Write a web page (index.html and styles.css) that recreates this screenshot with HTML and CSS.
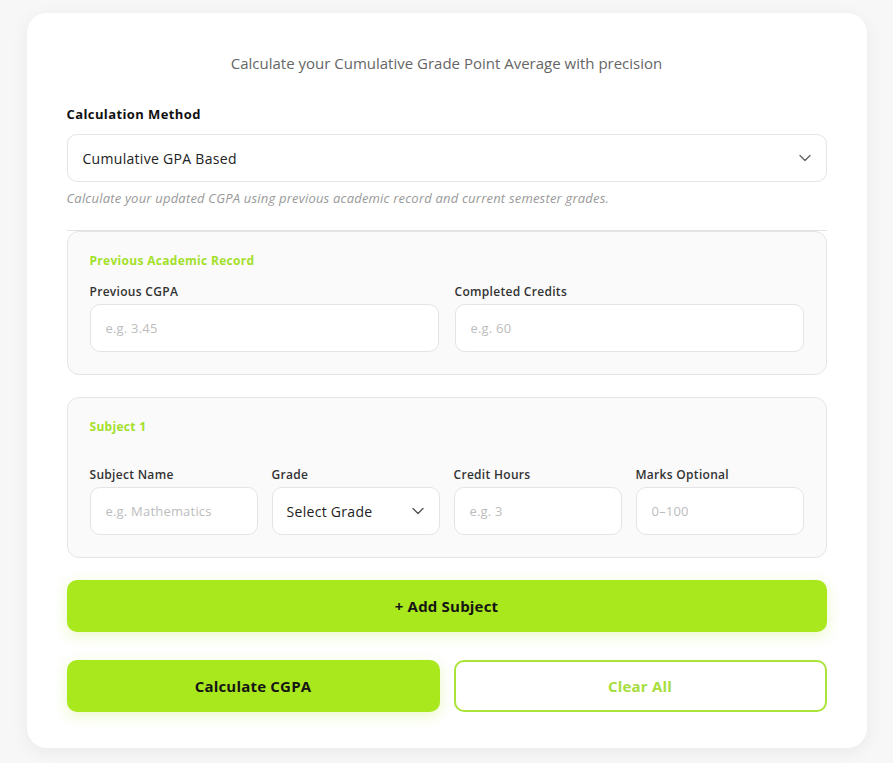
FILE: index.html
```html
<!DOCTYPE html>
<html>
<head>
  <link rel="stylesheet" href="styles.css">
</head>
<body>
  <div class="card">
    <p class="subtitle">Calculate your Cumulative Grade Point Average with precision</p>

    <label class="main-label">Calculation Method</label>
    <div class="select big">
      <span>Cumulative GPA Based</span>
      <svg width="14" height="14" viewBox="0 0 14 14"><path d="M2 4.5l5 5 5-5" fill="none" stroke="#666" stroke-width="1.4" stroke-linecap="round" stroke-linejoin="round"/></svg>
    </div>
    <p class="hint">Calculate your updated CGPA using previous academic record and current semester grades.</p>

    <div class="divider"></div>

    <div class="box">
      <h3>Previous Academic Record</h3>
      <div class="row two">
        <div class="field">
          <label>Previous CGPA</label>
          <input type="text" placeholder="e.g. 3.45">
        </div>
        <div class="field">
          <label>Completed Credits</label>
          <input type="text" placeholder="e.g. 60">
        </div>
      </div>
    </div>

    <div class="box subject">
      <h3>Subject 1</h3>
      <div class="row four">
        <div class="field">
          <label>Subject Name</label>
          <input type="text" placeholder="e.g. Mathematics">
        </div>
        <div class="field">
          <label>Grade</label>
          <div class="select">
            <span>Select Grade</span>
            <svg width="14" height="14" viewBox="0 0 14 14"><path d="M2 4.5l5 5 5-5" fill="none" stroke="#555" stroke-width="1.4" stroke-linecap="round" stroke-linejoin="round"/></svg>
          </div>
        </div>
        <div class="field">
          <label>Credit Hours</label>
          <input type="text" placeholder="e.g. 3">
        </div>
        <div class="field">
          <label>Marks Optional</label>
          <input type="text" placeholder="0–100">
        </div>
      </div>
    </div>

    <button class="btn fill wide">+ Add Subject</button>

    <div class="actions">
      <button class="btn fill">Calculate CGPA</button>
      <button class="btn outline">Clear All</button>
    </div>
  </div>
</body>
</html>
```

FILE: styles.css
```css
body{margin:0;padding:13px 0 20px;background:#f7f7f7;font-family:"Open Sans","Noto Sans",sans-serif;color:#222}
.card{width:840px;margin:0 auto;background:#fff;border-radius:20px;box-shadow:0 4px 18px rgba(0,0,0,0.06);padding:40px 40px 36px;box-sizing:border-box}
.subtitle{margin:0;text-align:center;font-size:15px;line-height:20px;color:#666}
.main-label{display:block;margin-top:32px;font-size:13px;line-height:18px;font-weight:700;color:#111;letter-spacing:0.4px}
.select{display:flex;align-items:center;justify-content:space-between;height:48px;box-sizing:border-box;border:1px solid #e4e4e4;border-radius:10px;background:#fff;padding:0 14px;font-size:14px;color:#222;letter-spacing:0.3px}
.select.big{margin-top:11px;padding:0 14px 0 15px}
.hint{margin:8px 0 0;font-size:13px;line-height:16px;font-style:italic;color:#999;letter-spacing:0.2px}
.divider{margin-top:24px;border-top:1px solid #e2e2e2}
.box{background:#fafafa;border:1px solid #e5e5e5;border-radius:12px;padding:20px 22px 22px}
.box h3{margin:0;font-size:12px;line-height:18px;font-weight:700;color:#a3e02a;letter-spacing:0.3px}
.subject{margin-top:22px}
.row{display:grid;margin-top:14px}
.row.two{grid-template-columns:1fr 1fr;gap:16px}
.row.four{grid-template-columns:repeat(4,1fr);gap:14px;margin-top:31px}
.field label{display:block;font-size:12px;line-height:16px;font-weight:600;color:#333;margin-bottom:4px;letter-spacing:0.3px}
.field input{width:100%;height:48px;box-sizing:border-box;border:1px solid #e4e4e4;border-radius:10px;background:#fff;padding:0 15px;font-family:inherit;font-size:13px;outline:none;letter-spacing:0.2px}
.field input::placeholder{color:#bdbdbd}
.btn{display:block;height:52px;border-radius:10px;font-family:inherit;font-size:15px;font-weight:700;cursor:pointer;box-sizing:border-box;letter-spacing:0.2px}
.fill{background:#aae81e;border:none;color:#151515;box-shadow:0 4px 14px rgba(170,232,30,0.25)}
.wide{width:100%;margin-top:22px}
.actions{display:grid;grid-template-columns:1fr 1fr;gap:14px;margin-top:28px}
.outline{background:#fff;border:2px solid #aae33a;color:#a6de3c}
```
